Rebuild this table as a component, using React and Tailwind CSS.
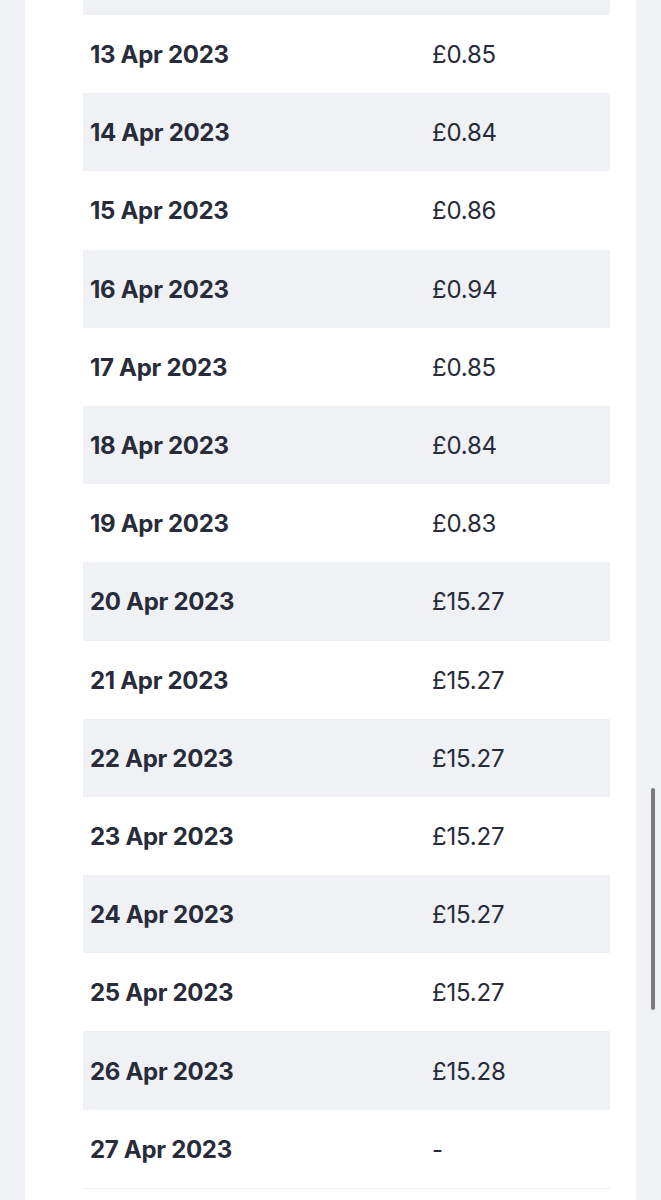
const rows = [
  ["13 Apr 2023", "£0.85"],
  ["14 Apr 2023", "£0.84"],
  ["15 Apr 2023", "£0.86"],
  ["16 Apr 2023", "£0.94"],
  ["17 Apr 2023", "£0.85"],
  ["18 Apr 2023", "£0.84"],
  ["19 Apr 2023", "£0.83"],
  ["20 Apr 2023", "£15.27"],
  ["21 Apr 2023", "£15.27"],
  ["22 Apr 2023", "£15.27"],
  ["23 Apr 2023", "£15.27"],
  ["24 Apr 2023", "£15.27"],
  ["25 Apr 2023", "£15.27"],
  ["26 Apr 2023", "£15.28"],
  ["27 Apr 2023", "-"],
];

export default function App() {
  return (
    <div className="relative h-[1200px] w-[661px] overflow-hidden bg-[#f0f1f5] font-['Inter',sans-serif] text-[#272b3a]">
      <div className="mx-[25px] h-full w-[611px] overflow-hidden bg-white pl-[58px] pr-[26px]">
        {/* tail of the previous row, scrolled mostly out of view */}
        <div className="h-[15px] bg-[#f0f1f5]" />
        <div className="border-b border-[#eceef2]">
          {rows.map(([date, price], i) => (
            <div
              key={date}
              className={`grid h-[78.2px] grid-cols-[349px_1fr] items-center pt-[2px] ${i % 2 === 1 ? "bg-[#f0f1f5]" : "bg-white"}`}
            >
              <span className="pl-[7px] text-[24px] font-bold tracking-[-0.3px]">{date}</span>
              <span className="text-[24px] font-normal tracking-[-0.2px]">{price}</span>
            </div>
          ))}
        </div>
      </div>
      <div className="absolute left-[651px] top-[788px] h-[222px] w-[4px] rounded-full bg-[#7a7a7d]" />
    </div>
  );
}
